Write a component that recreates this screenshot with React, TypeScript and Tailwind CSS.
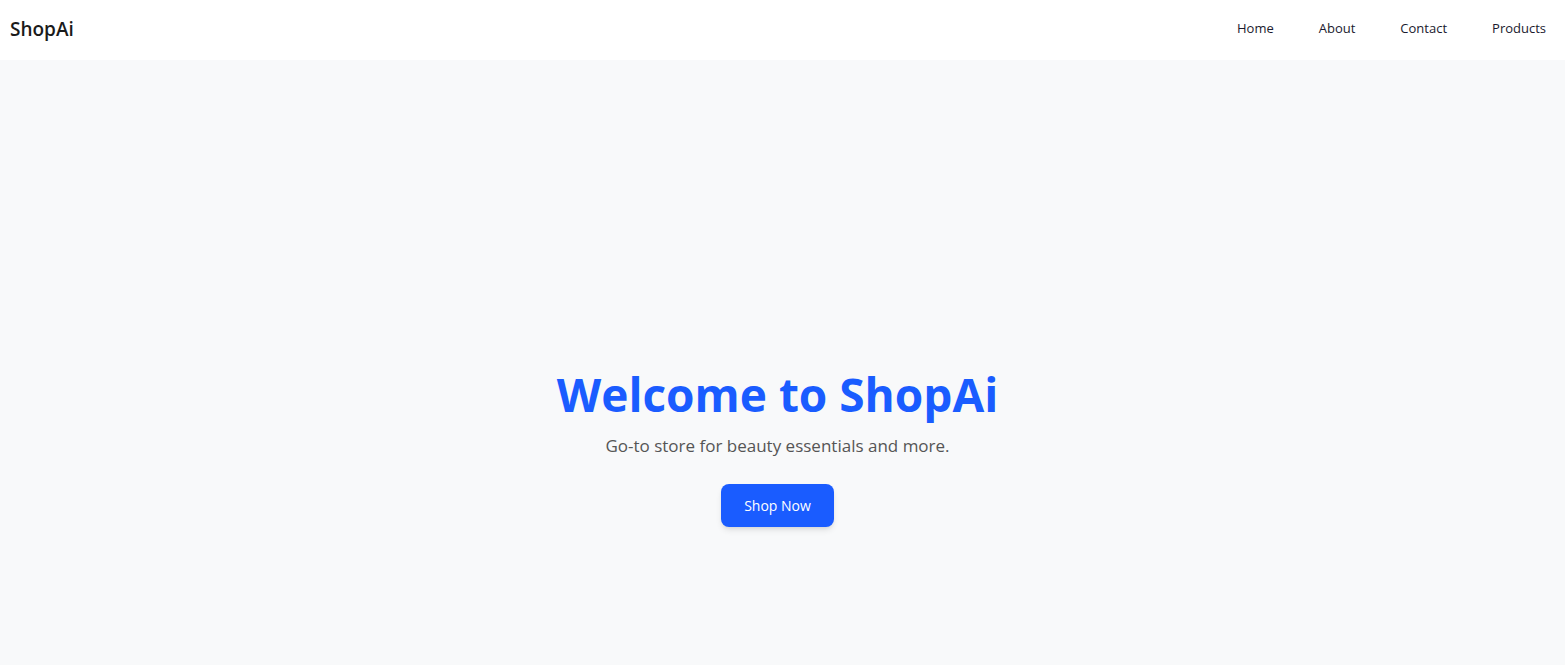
import React from 'react';

const navLinks = ['Home', 'About', 'Contact', 'Products'];

const App: React.FC = () => {
  return (
    <div className="min-h-screen bg-[#f8f9fa] font-['Open_Sans','Noto_Sans',sans-serif]">
      {/* Top bar */}
      <header className="h-[60px] bg-white flex items-center justify-between pl-[10px] pr-[19px]">
        <span className="text-[19px] font-semibold text-[#1a1a1a] mb-[2px]">ShopAi</span>
        <nav className="flex items-center gap-[45px] mb-[3px]">
          {navLinks.map((link) => (
            <a key={link} href="#" className="text-[13px] text-[#1a1a2e]">
              {link}
            </a>
          ))}
        </nav>
      </header>

      {/* Hero */}
      <section className="flex flex-col items-center pt-[307px] pr-[10px]">
        <h1 className="text-[46px] leading-[1.2] font-bold text-[#1a5cff]">Welcome to ShopAi</h1>
        <p className="mt-[11px] text-[17px] text-[#555]">Go-to store for beauty essentials and more.</p>
        <button className="mt-[25px] h-[43px] w-[113px] rounded-lg bg-[#1a5cff] text-[14px] text-white shadow-md">
          Shop Now
        </button>
      </section>
    </div>
  );
};

export default App;
